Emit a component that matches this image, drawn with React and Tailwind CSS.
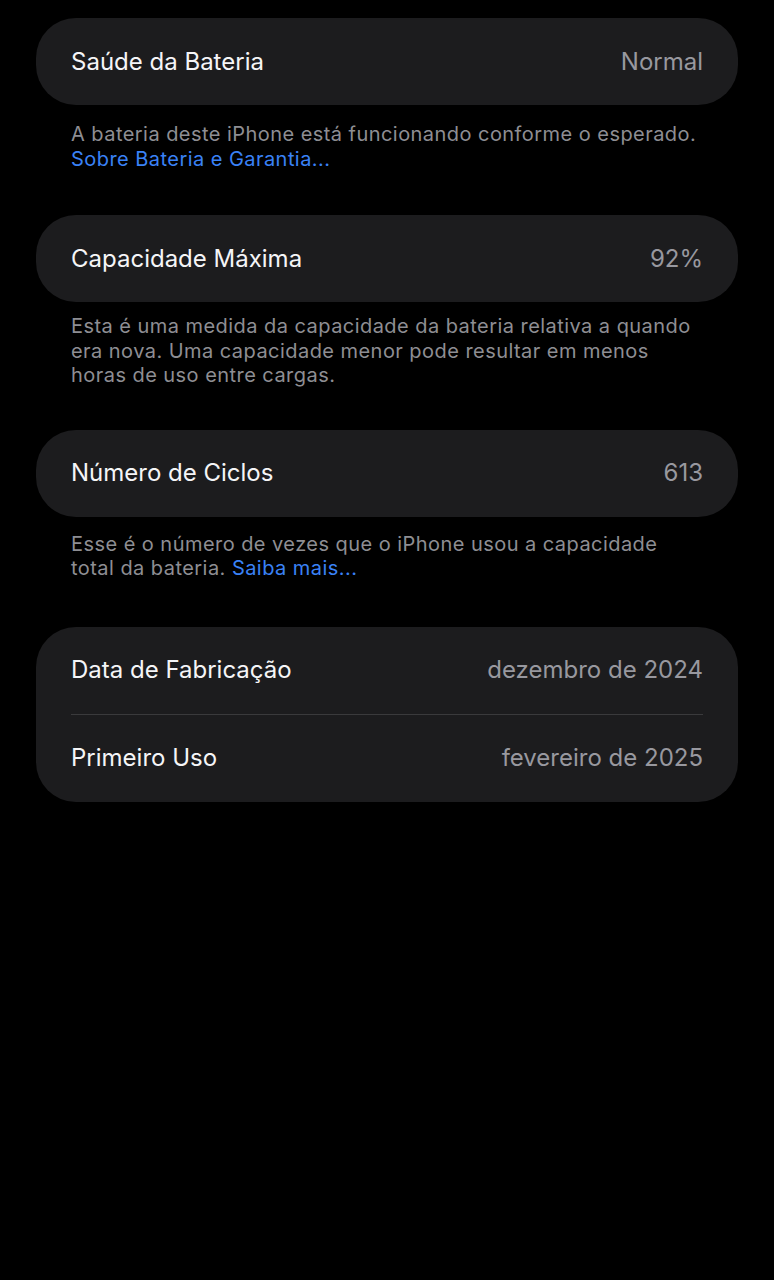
import React from 'react'

const font = { fontFamily: 'Inter, "Noto Sans", sans-serif' }

// One row inside a rounded card
const Row = ({ label, value }) => (
  <div className="flex items-center justify-between h-[87px] px-[35px]">
    <span className="text-[24px] text-[#f5f5f7]">{label}</span>
    <span className="text-[24px] text-[#98989f]">{value}</span>
  </div>
)

const Card = ({ children }) => (
  <div className="bg-[#1c1c1e] rounded-[40px] overflow-hidden">{children}</div>
)

const Footer = ({ className, children }) => (
  <p className={`px-[35px] text-[20px] tracking-[0.45px] leading-[24.5px] text-[#8e8e93] whitespace-nowrap ${className}`}>
    {children}
  </p>
)

const Link = ({ children }) => <span className="text-[#3a82f6]">{children}</span>

export default function App() {
  return (
    <div style={font} className="min-h-[1280px] bg-black px-[36px] pt-[18px]">
      <Card>
        <Row label="Saúde da Bateria" value="Normal" />
      </Card>
      <Footer className="mt-[17px] mb-[44px]">
        A bateria deste iPhone está funcionando conforme o esperado.
        <br />
        <Link>Sobre Bateria e Garantia...</Link>
      </Footer>

      <Card>
        <Row label="Capacidade Máxima" value="92%" />
      </Card>
      <Footer className="mt-[12px] mb-[42px]">
        Esta é uma medida da capacidade da bateria relativa a quando
        <br />
        era nova. Uma capacidade menor pode resultar em menos
        <br />
        horas de uso entre cargas.
      </Footer>

      <Card>
        <Row label="Número de Ciclos" value="613" />
      </Card>
      <Footer className="mt-[15px] mb-[46px]">
        Esse é o número de vezes que o iPhone usou a capacidade
        <br />
        total da bateria. <Link>Saiba mais...</Link>
      </Footer>

      <Card>
        <Row label="Data de Fabricação" value="dezembro de 2024" />
        <div className="mx-[35px] h-px bg-[#3a3a3c]" />
        <Row label="Primeiro Uso" value="fevereiro de 2025" />
      </Card>
    </div>
  )
}
